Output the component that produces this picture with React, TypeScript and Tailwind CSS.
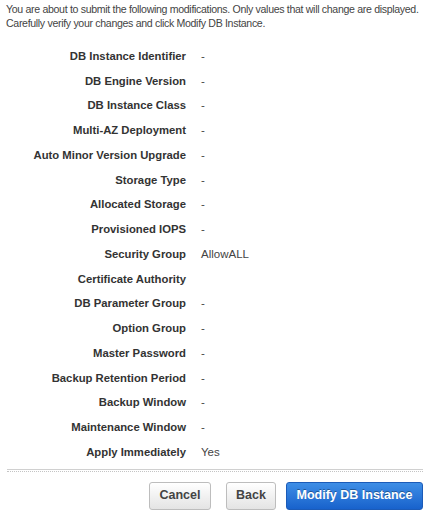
import React from "react";

const rows: [string, string][] = [
  ["DB Instance Identifier", "-"],
  ["DB Engine Version", "-"],
  ["DB Instance Class", "-"],
  ["Multi-AZ Deployment", "-"],
  ["Auto Minor Version Upgrade", "-"],
  ["Storage Type", "-"],
  ["Allocated Storage", "-"],
  ["Provisioned IOPS", "-"],
  ["Security Group", "AllowALL"],
  ["Certificate Authority", ""],
  ["DB Parameter Group", "-"],
  ["Option Group", "-"],
  ["Master Password", "-"],
  ["Backup Retention Period", "-"],
  ["Backup Window", "-"],
  ["Maintenance Window", "-"],
  ["Apply Immediately", "Yes"],
];

export default function App() {
  return (
    <div
      className="w-[430px] h-[510px] overflow-hidden bg-white"
      style={{ fontFamily: '"Liberation Sans", Arial, sans-serif' }}
    >
      <div className="pl-[6px] pt-[2px] text-[10.6px] leading-[14px] tracking-[-0.33px] text-[#444] whitespace-nowrap">
        <p>You are about to submit the following modifications. Only values that will change are displayed.</p>
        <p>Carefully verify your changes and click Modify DB Instance.</p>
      </div>
      <div className="mt-[14px] flex flex-col">
        {rows.map(([label, value]) => (
          <div key={label} className="flex h-[24.75px] items-center text-[11.3px]">
            <div className="w-[186px] text-right font-bold text-[#333]">{label}</div>
            <div className="ml-[15px] text-[11.5px] text-[#444]">{value}</div>
          </div>
        ))}
      </div>
      <div
        className="mx-[7px] mt-[4px] h-[3px] border-t border-[#d0d0d0] border-b border-b-[#c4c4c4] border-dotted"
        style={{ borderTopStyle: "solid" }}
      />
      <div className="mt-[10px] flex justify-end pr-[7px]">
        <button className="h-[28px] w-[62px] rounded-[3px] border border-[#bdbdbd] bg-gradient-to-b from-[#ffffff] to-[#e4e4e4] text-[12.5px] font-bold text-[#444]">
          Cancel
        </button>
        <button className="ml-[15px] h-[28px] w-[50px] rounded-[3px] border border-[#bdbdbd] bg-gradient-to-b from-[#ffffff] to-[#e4e4e4] text-[12.5px] font-bold text-[#444]">
          Back
        </button>
        <button
          className="ml-[10px] h-[28px] w-[137px] rounded-[3px] border border-[#1b5bb8] bg-gradient-to-b from-[#3e8ee6] to-[#1862cc] text-[12.5px] font-bold text-white"
          style={{ textShadow: "0 -1px 0 rgba(0,0,0,0.35)" }}
        >
          Modify DB Instance
        </button>
      </div>
    </div>
  );
}
